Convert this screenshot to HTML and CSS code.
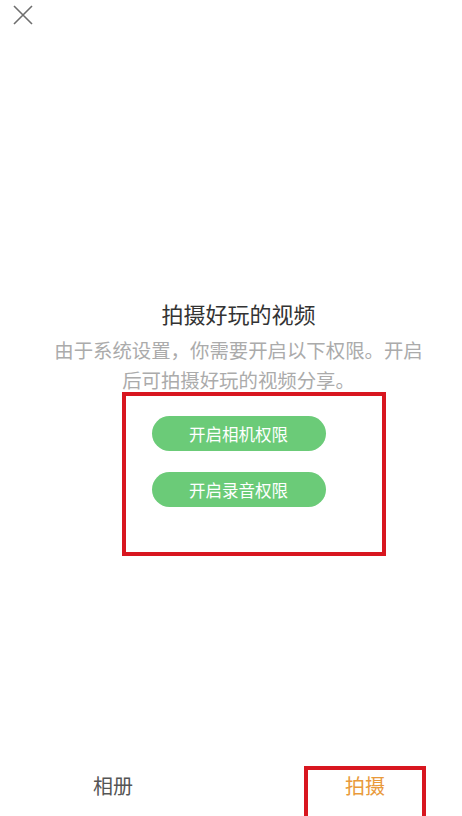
FILE: index.html
```html
<!DOCTYPE html>
<html lang="zh-CN">
<head>
    <meta charset="UTF-8">
    <meta name="viewport" content="width=device-width, initial-scale=1.0">
    <title>拍摄</title>
    <link rel="stylesheet" href="styles.css">
</head>
<body>
    <div class="top-bar">
        <button class="close-btn" aria-label="关闭">
            <svg width="20" height="20" viewBox="0 0 20 20">
                <path d="M1 1 L19 19 M19 1 L1 19" stroke="#6e6e6e" stroke-width="1.6" fill="none"/>
            </svg>
        </button>
    </div>

    <div class="permission">
        <h1>拍摄好玩的视频</h1>
        <p class="desc">由于系统设置，你需要开启以下权限。开启后可拍摄好玩的视频分享。</p>
        <div class="actions">
            <button class="grant-btn">开启相机权限</button>
            <button class="grant-btn">开启录音权限</button>
        </div>
        <div class="mark mark-actions"></div>
    </div>

    <div class="tab-bar">
        <div class="tab">相册</div>
        <div class="tab active marked">拍摄</div>
    </div>
</body>
</html>
```

FILE: styles.css
```css
* {
    box-sizing: border-box;
}
html, body {
    margin: 0;
    padding: 0;
}
body {
    width: 462px;
    height: 816px;
    overflow: hidden;
    display: flex;
    flex-direction: column;
    font-family: "Noto Sans CJK SC", "Noto Sans", sans-serif;
    background-color: #fff;
    color: #333;
    position: relative;
}
.top-bar {
    padding: 5px 13px 0;
    height: 25px;
}
.close-btn {
    display: block;
    width: 20px;
    height: 20px;
    padding: 0;
    border: none;
    background: none;
}
.close-btn svg {
    display: block;
}
.permission {
    margin-top: 273px;
    padding-left: 15px;
    text-align: center;
}
h1 {
    margin: 0;
    font-size: 22px;
    line-height: 30px;
    font-weight: normal;
    color: #333;
}
.desc {
    width: 378px;
    margin: 7px auto 0;
    font-size: 19.4px;
    line-height: 30px;
    color: #ababab;
}
.actions {
    display: flex;
    flex-direction: column;
    align-items: center;
    gap: 21px;
    margin-top: 21px;
}
.grant-btn {
    width: 174px;
    height: 35px;
    border: none;
    border-radius: 18px;
    background-color: #6bcb78;
    color: #fff;
    font-family: inherit;
    font-size: 16.5px;
    padding: 0;
}
.mark {
    position: absolute;
    border: 4px solid #d8161f;
}
.mark-actions {
    left: 122px;
    top: 392px;
    width: 264px;
    height: 164px;
}
.tab-bar {
    margin-top: auto;
    display: flex;
    justify-content: space-between;
    padding: 0 36px 0 52px;
}
.tab {
    width: 122px;
    height: 50px;
    border: 4px solid transparent;
    border-bottom: 0;
    text-align: center;
    font-size: 20px;
    line-height: 32px;
    color: #555;
}
.tab.active {
    color: #e99a3b;
}
.tab.marked {
    border-color: #d8161f;
}
```
